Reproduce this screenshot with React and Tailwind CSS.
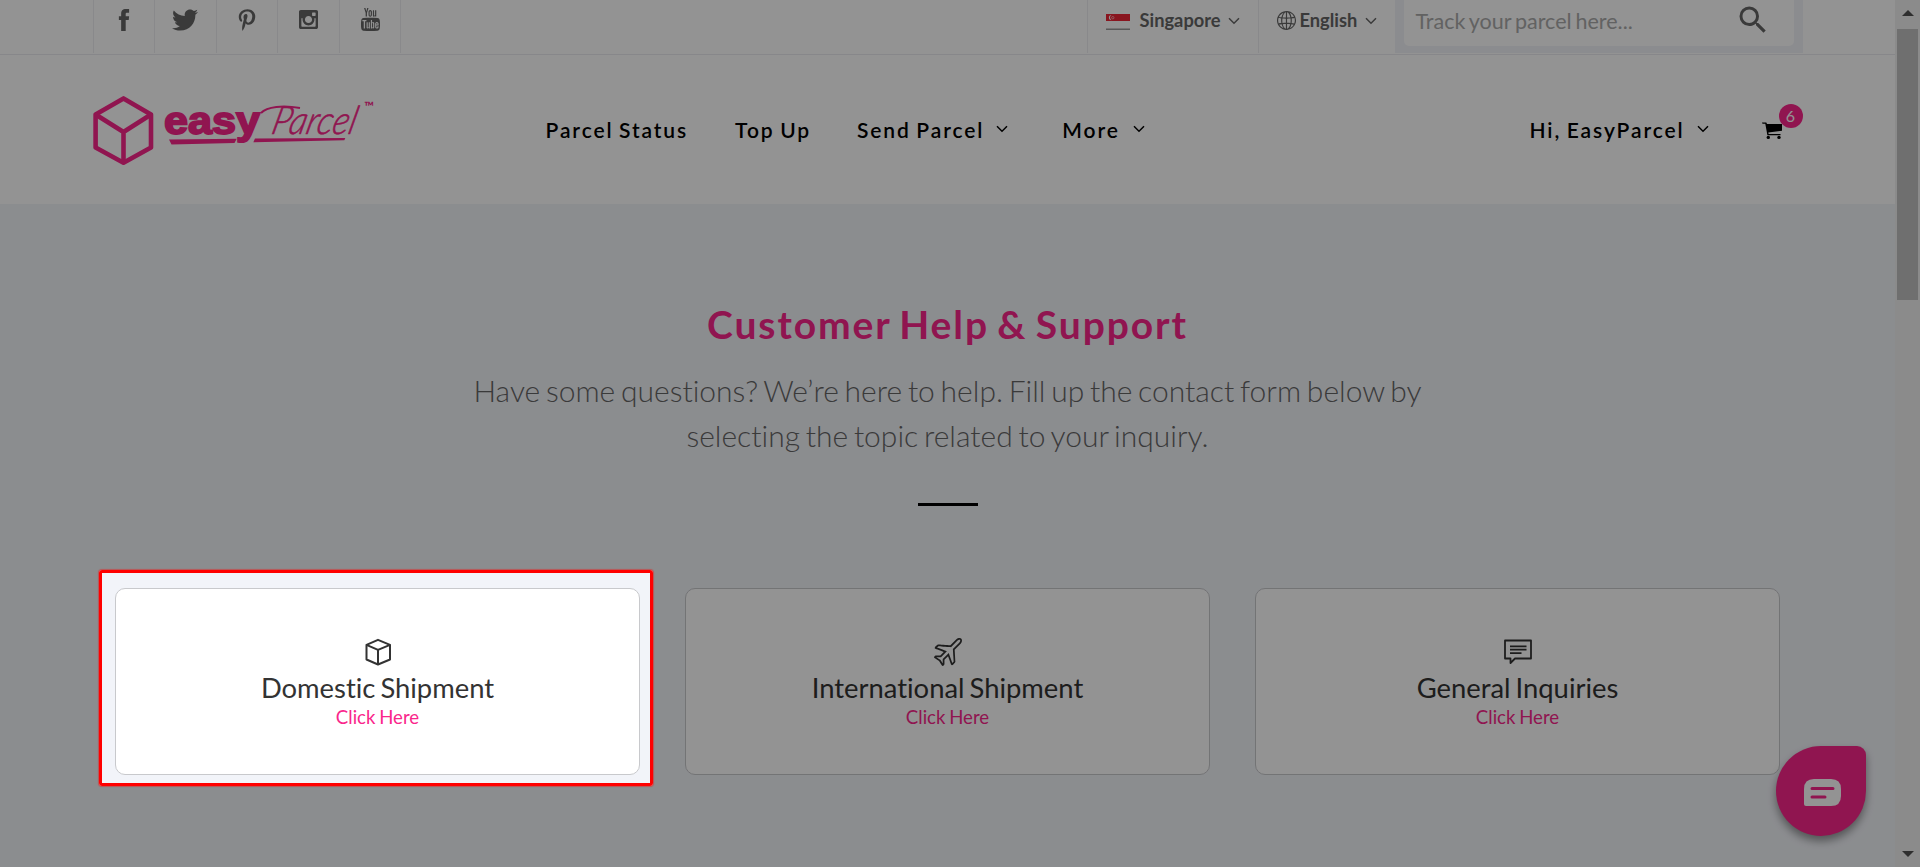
import React from "react";
import { FaTwitter, FaPinterestP } from "react-icons/fa";
import { ImInstagram } from "react-icons/im";
import { MdSearch } from "react-icons/md";
import { SlGlobe, SlPlane } from "react-icons/sl";
import { TfiFacebook, TfiYoutube } from "react-icons/tfi";

const socials = [
  { name: "facebook", Icon: TfiFacebook, size: "w-6 h-[22px]" },
  { name: "twitter", Icon: FaTwitter, size: "size-[26px]" },
  { name: "pinterest", Icon: FaPinterestP, size: "size-[22px]" },
  { name: "instagram", Icon: ImInstagram, size: "size-[19px]" },
  { name: "youtube", Icon: TfiYoutube, size: "size-[23px]" },
];

const Chevron = ({ className }) => (
  <svg viewBox="0 0 12 8" className={className} fill="none" stroke="currentColor" strokeWidth="1.5">
    <path d="M1 1.2 L6 6.2 L11 1.2" />
  </svg>
);

const Logo = () => (
  <svg width="284" height="72" viewBox="0 0 284 72" className="block text-[#fa268b]">
    <g fill="none" stroke="currentColor" strokeWidth="4.6" strokeLinejoin="round">
      <path d="M30.5 3.4 L58 19.5 V52.5 L30.5 67.8 L2.6 52.5 V19.5 Z" />
      <path d="M2.6 19.5 L30.5 37 L58 19.5 M30.5 37 V67.5" />
    </g>
    <text
      x="71"
      y="39"
      fill="currentColor"
      stroke="currentColor"
      strokeWidth="1.8"
      textLength="96"
      lengthAdjust="spacingAndGlyphs"
      className="font-['Liberation_Sans',sans-serif] text-[38px] font-bold tracking-normal"
    >
      easy
    </text>
    <path fill="currentColor" d="M76 44.5 L143.7 43.8 L141.5 48 L78.5 49.4 Z" />
    <path fill="currentColor" d="M162 43.6 L252.3 43 L251.3 45.3 L160.3 47.3 Z" />
    <text
      transform="translate(177 38.5) skewX(-14)"
      fill="currentColor"
      stroke="currentColor"
      strokeWidth="0.6"
      textLength="84"
      lengthAdjust="spacingAndGlyphs"
      className="font-['Lato',sans-serif] text-[39px] font-light italic tracking-normal"
    >
      Parcel
    </text>
    <path
      d="M168 18 C174 11.5 190 10 207 13"
      fill="none"
      stroke="currentColor"
      strokeWidth="2"
    />
    <text x="271" y="16" fill="currentColor" className="font-['Lato',sans-serif] text-[13px] font-bold tracking-normal">
      ™
    </text>
  </svg>
);

const Flag = () => (
  <svg width="24" height="16" viewBox="0 0 24 16" className="block">
    <rect y="1" width="24" height="15" fill="#999" />
    <rect width="24" height="14.5" fill="#fff" />
    <rect width="24" height="7" fill="#ee2536" />
    <path d="M5.5 1 A2.6 2.6 0 1 0 5.5 6.2 A3 3 0 0 1 5.5 1" fill="#fff" />
    <circle cx="6.8" cy="3.7" r="1.2" fill="none" stroke="#fff" strokeWidth="0.5" />
  </svg>
);

const Cart = () => (
  <svg width="21" height="18" viewBox="0 0 21 18" fill="currentColor">
    <path d="M0 0.6 H4.3 L5 2 H20 V8.8 L6.3 10.6 L6.6 12 H18.5 V13.2 H5.4 L3.3 1.8 H0.5 Z" />
    <circle cx="6.3" cy="15.4" r="1.7" />
    <circle cx="17" cy="15.4" r="1.7" />
  </svg>
);

const BoxIcon = () => (
  <svg width="28" height="28" viewBox="0 0 28 28" fill="none" stroke="currentColor" strokeWidth="2" strokeLinejoin="round">
    <path d="M14 1.8 L26 6.8 V21.5 L14 26.5 L2.5 21.5 V6.8 Z" />
    <path d="M2.5 6.8 L14 11.8 L26 6.8 M14 11.8 V26.5" />
  </svg>
);

const PlaneIcon = () => <SlPlane className="size-7" />;

const ChatIcon = () => (
  <svg width="28" height="28" viewBox="0 0 28 28" fill="none" stroke="currentColor" strokeWidth="1.8" strokeLinejoin="round">
    <path d="M1 2.5 H27 V20.5 H11 L6.5 25 V20.5 H1 Z" />
    <path d="M6 8.3 H22.5 M6 11.7 H22.5 M6 15.2 H17.5" />
  </svg>
);

const topics = [
  { title: "Domestic Shipment", Icon: BoxIcon },
  { title: "International Shipment", Icon: PlaneIcon },
  { title: "General Inquiries", Icon: ChatIcon },
];

const TopBar = () => (
  <div className="h-[55px] border-b border-[#ebebf0] flex justify-center bg-white">
    <div className="w-[1710px] h-[53px] flex justify-between">
      <div className="flex border-l border-[#ededf2]">
        {socials.map(({ name, Icon, size }) => (
          <a
            key={name}
            className="w-[61.6px] h-full border-r border-[#ededf2] flex items-center justify-center pb-[14px] text-[#666]"
          >
            <Icon className={size} />
          </a>
        ))}
      </div>
      <div className="flex text-[18.3px] font-bold text-[#666]">
        <div className="w-[171px] border-l border-[#ededf2] flex items-start pl-[18px]">
          <div className="mt-[14px]">
            <Flag />
          </div>
          <span className="w-[80px] ml-[10px] mt-2 leading-6">Singapore</span>
          <Chevron className="w-3 h-2 ml-2 mt-[17px]" />
        </div>
        <div className="w-[137px] border-l border-[#ededf2] flex items-start pl-[18px]">
          <SlGlobe className="size-[19px] mt-[11px]" />
          <span className="w-[58px] ml-1 mt-2 leading-6">English</span>
          <Chevron className="w-3 h-2 ml-[7px] mt-[17px]" />
        </div>
        <div className="w-[408px] bg-[#f1f3f8] px-[9px] pb-[7px]">
          <div className="h-full bg-white rounded-b-[5px] flex justify-between pl-3 pr-[23px]">
            <span className="mt-[7px] leading-7 text-[21.5px] font-normal text-[#aaa] [word-spacing:-1.6px]">
              Track your parcel here...
            </span>
            <MdSearch className="size-9 mt-[2px]" />
          </div>
        </div>
      </div>
    </div>
  </div>
);

const Header = () => (
  <div className="h-[149px] bg-white flex justify-center">
    <div className="w-[1710px] flex items-start text-[21px] leading-6 font-semibold tracking-[1.9px] [word-spacing:-1.6px] text-black">
      <div className="mt-10">
        <Logo />
      </div>
      <nav className="flex ml-[169px] mt-[63px]">
        <a>Parcel Status</a>
        <a className="ml-[47px]">Top Up</a>
        <a className="ml-[46px] flex">
          Send Parcel <Chevron className="w-3 h-2 ml-3 mt-[7px]" />
        </a>
        <a className="ml-[54px] flex">
          More <Chevron className="w-3 h-2 ml-[13px] mt-[7px]" />
        </a>
      </nav>
      <div className="ml-auto mt-[63px] flex">
        <a className="flex">
          Hi, EasyParcel <Chevron className="w-3 h-2 ml-3 mt-[7px]" />
        </a>
        <div className="relative ml-[53px] mr-5 mt-1">
          <Cart />
          <span className="absolute -top-[18px] left-[17px] size-6 rounded-full bg-[#fa268b] text-white text-[16px] leading-6 text-center font-normal tracking-normal">
            6
          </span>
        </div>
      </div>
    </div>
  </div>
);

const TopicCard = ({ title, Icon }) => (
  <div className="w-[525px] h-[187px] bg-white border border-[#c8c9cc] rounded-[10px] flex flex-col items-center pt-[49px] text-[#333]">
    <Icon />
    <h3 className="mt-[5px] text-[27.4px] leading-[34px] [word-spacing:-2px]">{title}</h3>
    <a className="text-[18.6px] leading-6 text-[#fa268b] [word-spacing:-1px]">Click Here</a>
  </div>
);

const Scrollbar = () => (
  <div className="w-[25px] bg-[#f1f1f1] flex flex-col items-center text-[#505050]">
    <svg width="12" height="6" viewBox="0 0 12 6" className="mt-[10px]" fill="currentColor">
      <path d="M0 6 L6 0 L12 6 Z" />
    </svg>
    <div className="mt-[13px] w-[21px] h-[271px] bg-[#c1c1c1]" />
    <svg width="12" height="6" viewBox="0 0 12 6" className="mt-auto mb-[10px]" fill="currentColor">
      <path d="M0 0 L12 0 L6 6 Z" />
    </svg>
  </div>
);

const ChatButton = () => (
  <button className="absolute left-[1776px] top-[746px] size-[90px] rounded-[45px] rounded-tr-[9px] bg-[#fa268b] shadow-[0_5px_8px_rgba(0,0,0,0.4)] flex items-center justify-center pt-[3px] pl-[3px]">
    <svg width="37" height="27" viewBox="0 0 37 27">
      <path d="M10 0 H27 Q37 0 37 10 V17 Q37 27 27 27 H2 Q0 27 0 25 V10 Q0 0 10 0" fill="#fff" />
      <path d="M8 9.5 H29 M8 18 H21" stroke="#fa268b" strokeWidth="3" strokeLinecap="round" />
    </svg>
  </button>
);

export default function App() {
  return (
    <div className="relative w-[1920px] h-[867px] overflow-hidden flex font-['Lato',sans-serif] [font-variant-ligatures:none]">
      <div className="flex-1 bg-[#f2f4f9]">
        <TopBar />
        <Header />
        <main className="flex flex-col items-center">
          <h1 className="mt-24 text-[39px] leading-[48px] font-bold tracking-[1.9px] [word-spacing:-3px] text-[#fa268b]">
            Customer Help &amp; Support
          </h1>
          <p className="mt-5 w-[980px] text-center text-[30px] leading-[45px] font-light [word-spacing:-2.4px] text-[#666]">
            Have some questions? We’re here to help. Fill up the contact form below by selecting the
            topic related to your inquiry.
          </p>
          <div className="mt-[45px] w-[60px] h-[3px] bg-black" />
          <div className="mt-[82px] flex gap-[45px]">
            {topics.map((topic) => (
              <TopicCard key={topic.title} {...topic} />
            ))}
          </div>
        </main>
      </div>
      <Scrollbar />
      <ChatButton />
      {/* spotlight around the first topic, everything else is dimmed */}
      <div className="absolute left-[99px] top-[570px] w-[554px] h-[216px] rounded-[3px] border-[3px] border-[#ff0000] shadow-[0_0_1px_1px_rgba(255,0,0,0.4),0_0_0_2000px_rgba(0,0,0,0.424)]" />
    </div>
  );
}
